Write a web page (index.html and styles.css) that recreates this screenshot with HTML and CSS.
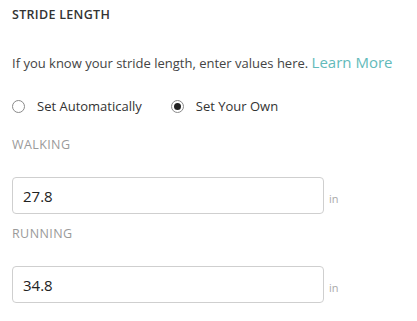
FILE: index.html
```html
<!DOCTYPE html>
<html>
<head>
<meta charset="utf-8">
<link rel="stylesheet" href="styles.css">
</head>
<body>
<div class="panel">
  <h2 class="title">STRIDE LENGTH</h2>
  <p class="intro">If you know your stride length, enter values here. <a class="learn" href="#">Learn More</a></p>
  <div class="radios">
    <label class="radio"><span class="dot"></span>Set Automatically</label>
    <label class="radio"><span class="dot checked"></span>Set Your Own</label>
  </div>
  <div class="field">
    <div class="label">WALKING</div>
    <div class="row">
      <div class="input">27.8</div>
      <span class="unit">in</span>
    </div>
  </div>
  <div class="field">
    <div class="label">RUNNING</div>
    <div class="row">
      <div class="input">34.8</div>
      <span class="unit">in</span>
    </div>
  </div>
</div>
</body>
</html>
```
FILE: styles.css
```css
html, body {
  margin: 0;
  background: #ffffff;
}
body {
  font-family: "Open Sans", "Liberation Sans", sans-serif;
  color: #3a3a3a;
}
.panel {
  padding: 6px 12px 0 12px;
}
.title {
  margin: 0;
  font-size: 12.5px;
  font-weight: 600;
  line-height: 18px;
  color: #333;
  letter-spacing: 0.3px;
}
.intro {
  margin: 28px 0 0 0;
  font-size: 13px;
  line-height: 20px;
  color: #444;
}
.learn {
  color: #62baba;
  font-size: 15px;
  text-decoration: none;
}
.radios {
  display: flex;
  gap: 29px;
  margin-top: 24px;
  font-size: 13px;
  line-height: 18px;
  color: #333;
}
.radio {
  display: flex;
  align-items: center;
  gap: 12px;
}
.dot {
  box-sizing: border-box;
  width: 13px;
  height: 13px;
  border: 1px solid #8a8a8a;
  border-radius: 50%;
  display: flex;
  align-items: center;
  justify-content: center;
}
.dot.checked::after {
  content: "";
  width: 7px;
  height: 7px;
  border-radius: 50%;
  background: #222;
}
.field {
  margin-top: 22px;
}
.field + .field {
  margin-top: 12px;
}
.label {
  font-size: 12.5px;
  line-height: 16px;
  color: #9a9a9a;
  letter-spacing: 0.4px;
}
.row {
  display: flex;
  align-items: center;
  gap: 5px;
  margin-top: 24px;
}
.input {
  box-sizing: border-box;
  width: 312px;
  height: 37px;
  border: 1px solid #cfcfcf;
  border-radius: 4px;
  padding: 0 10px;
  display: flex;
  align-items: center;
  font-size: 15px;
  color: #222;
}
.unit {
  font-size: 11px;
  color: #aaa;
  padding-top: 6px;
}
```
